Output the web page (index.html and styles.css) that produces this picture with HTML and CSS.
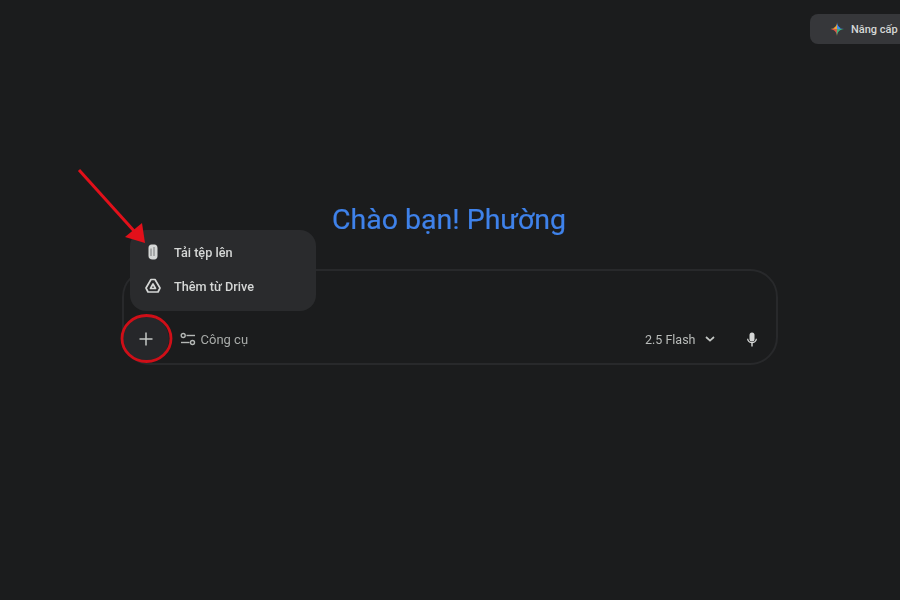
FILE: index.html
```html
<!DOCTYPE html>
<html lang="vi">
<head>
<meta charset="utf-8">
<title>Gemini</title>
<link rel="stylesheet" href="styles.css">
</head>
<body>
<div class="page">
  <header class="topbar">
    <button class="upgrade">
      <svg class="spark" width="14" height="14" viewBox="0 0 14 14">
        <path d="M7 0C7.300 4 4 6.700 0 7 2 7 5 6 7 7Z" fill="#e9a53a"/>
        <path d="M7 0C7.300 4 10 6.700 14 7 12 7 9 6 7 7Z" fill="#3f8cf0"/>
        <path d="M0 7C4 7.300 6.700 10 7 14 7 12 8 9 7 7Z" fill="#d8574a"/>
        <path d="M14 7C10 7.300 7.300 10 7 14 7 12 6 9 7 7Z" fill="#3bb27a"/>
        <path d="M7 3.500L7 7 3.500 7Z" fill="#e9a53a"/>
        <path d="M7 3.500L10.500 7 7 7Z" fill="#3f8cf0"/>
        <path d="M3.500 7L7 7 7 10.500Z" fill="#d8574a"/>
        <path d="M10.500 7L7 10.500 7 7Z" fill="#3bb27a"/>
      </svg>
      <span>Nâng cấp</span>
    </button>
  </header>
  <main class="main">
    <h1 class="greeting">Chào bạn! Phường</h1>
    <section class="composer">
      <div class="toolbar">
        <div class="tools-left">
          <button class="plus">
            <svg width="14" height="14" viewBox="0 0 14 14"><path d="M7 .5v13M.5 7h13" stroke="#c4c7c5" stroke-width="1.500" fill="none"/></svg>
          </button>
          <button class="tools">
            <svg width="16" height="14" viewBox="0 0 16 14" fill="none" stroke="#b5b8b6" stroke-width="1.400">
              <circle cx="3.200" cy="3.500" r="2"/><path d="M6.500 3.500H15"/>
              <circle cx="12.500" cy="10.500" r="2"/><path d="M1 10.500h8.500"/>
            </svg>
            <span>Công cụ</span>
          </button>
        </div>
        <div class="tools-right">
          <button class="model">
            <span>2.5 Flash</span>
            <svg width="10" height="6" viewBox="0 0 10 6"><path d="M1 1l4 3.600L9 1" stroke="#c4c7c5" stroke-width="1.700" fill="none"/></svg>
          </button>
          <button class="mic">
            <svg width="12" height="15" viewBox="0 0 12 15" fill="#d5d7d6">
              <rect x="3.500" y="0.500" width="5" height="9" rx="2.500"/>
              <path d="M1 6.800h1.200c.2 2 1.700 3.300 3.800 3.300s3.600-1.300 3.800-3.300H11c-.2 2.500-2 4.100-4.300 4.400V14.500H5.300v-3.300C3 10.900 1.200 9.300 1 6.800Z"/>
            </svg>
          </button>
        </div>
      </div>
    </section>
  </main>

  <div class="menu">
    <div class="menu-item">
      <svg class="menu-icon" width="16" height="16" viewBox="0 0 16 16">
        <path d="M3.500 4C3.500 2 4.700.5 6.500.5h3c1.700 0 3 1.500 3 3.500v8c0 2-1.300 3.500-3 3.500h-2C5 15.500 3.500 14 3.500 12Z" fill="#d5d7d6"/>
        <path d="M6 4.500v7.500M9 3v9" stroke="#77797b" stroke-width="1" fill="none"/>
      </svg>
      <span>Tải tệp lên</span>
    </div>
    <div class="menu-item">
      <svg class="menu-icon" width="16" height="16" viewBox="0 0 16 16" fill="none" stroke="#d5d7d6" stroke-width="1.700" stroke-linejoin="round">
        <path d="M6 1.500h4l5 8.500-2 4H3l-2-4Z"/>
        <path d="M8 6l2.500 4.500h-5Z"/>
      </svg>
      <span>Thêm từ Drive</span>
    </div>
  </div>

  <svg class="annotation" width="900" height="600" viewBox="0 0 900 600">
    <path d="M79 170L135 232" stroke="#e2101a" stroke-width="3" fill="none"/>
    <path d="M145 243L125 237 142 223Z" fill="#e2101a"/>
    <ellipse cx="146.500" cy="338.500" rx="24.500" ry="23" stroke="#cf0f18" stroke-width="2.800" fill="none"/>
  </svg>
</div>
</body>
</html>
```
FILE: styles.css
```css
* { box-sizing: border-box; }
html, body { margin: 0; height: 100%; }
body {
  background: #1b1c1d;
  font-family: Roboto, "Noto Sans", sans-serif;
  color: #c4c7c5;
  overflow: hidden;
}
button {
  background: none;
  border: 0;
  padding: 0;
  color: inherit;
  font: inherit;
  display: flex;
  align-items: center;
}
.page {
  position: relative;
  width: 900px;
  height: 600px;
  overflow: hidden;
  filter: blur(0.55px);
}
.topbar {
  display: flex;
  justify-content: flex-end;
  padding-top: 14px;
  height: 44px;
}
.upgrade {
  width: 90px;
  height: 30px;
  padding-left: 20px;
  gap: 7px;
  background: #36373a;
  border-radius: 8px 0 0 8px;
  font-size: 11px;
  font-weight: 500;
  color: #d5d7d6;
  white-space: nowrap;
  overflow: hidden;
}
.spark { flex: none; }
.main {
  display: flex;
  flex-direction: column;
  align-items: center;
  padding-top: 158px;
}
.greeting {
  margin: 0 0 31px;
  width: 100%;
  padding-right: 2px;
  text-align: center;
  font-size: 28.500px;
  line-height: 36px;
  font-weight: 400;
  color: #3f82ea;
  -webkit-text-stroke: 0.2px #3f82ea;
}
.composer {
  width: 656px;
  height: 96px;
  margin-left: -1px;
  border: 2px solid #28292b;
  border-radius: 28px;
  display: flex;
  flex-direction: column;
  justify-content: flex-end;
  padding: 0 7px 1px 0;
}
.toolbar {
  display: flex;
  justify-content: space-between;
  align-items: center;
  height: 46px;
}
.tools-left, .tools-right { display: flex; align-items: center; }
.plus {
  width: 46px;
  height: 46px;
  margin-left: -1px;
  justify-content: center;
  border-radius: 50%;
  background: #26272a;
}
.tools {
  margin-left: 11px;
  gap: 5px;
  font-size: 13px;
  color: #a9acaa;
}
.model {
  gap: 9px;
  font-size: 12.500px;
  color: #b9bcba;
  margin-right: 31px;
}
.mic { margin-right: 11px; }
.menu {
  position: absolute;
  left: 130px;
  top: 230px;
  width: 186px;
  height: 81px;
  padding-top: 5px;
  background: #2a2b2d;
  border-radius: 16px;
}
.menu-item {
  display: flex;
  align-items: center;
  height: 34px;
  padding-left: 15px;
  gap: 13px;
  font-size: 12.700px;
  font-weight: 500;
  color: #d5d7d6;
}
.menu-icon { flex: none; }
.annotation {
  position: absolute;
  left: 0;
  top: 0;
  pointer-events: none;
}
```
